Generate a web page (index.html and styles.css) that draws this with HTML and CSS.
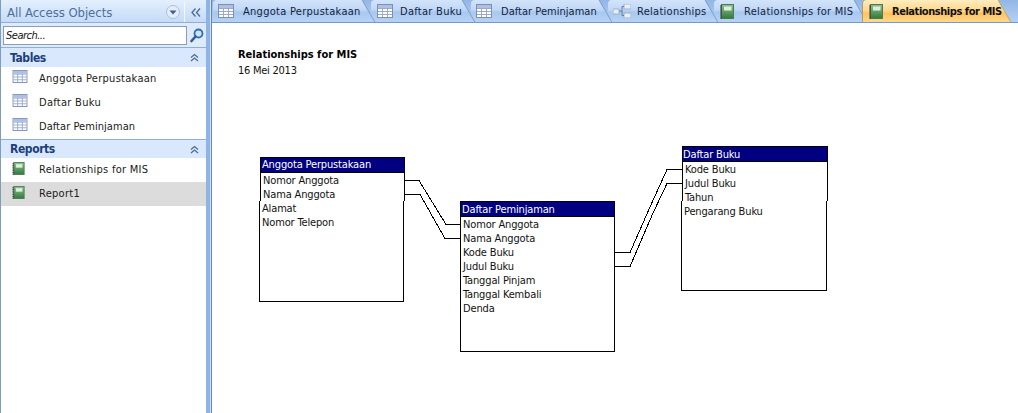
FILE: index.html
```html
<!DOCTYPE html>
<html lang="id">
<head>
<meta charset="utf-8">
<title>Relationships for MIS</title>
<link rel="stylesheet" href="styles.css">
</head>
<body>
<svg class="defs" width="0" height="0" aria-hidden="true">
  <defs>
    <linearGradient id="bookG" x1="0" y1="0" x2="0" y2="1"><stop offset="0" stop-color="#8fc28f"/><stop offset="1" stop-color="#2f7a3a"/></linearGradient>
    <symbol id="i-table" viewBox="0 0 16 14">
      <rect x=".5" y=".5" width="15" height="13" fill="#fff" stroke="#7b8fb8"/>
      <rect x="1" y="1" width="14" height="3" fill="#aebfe0"/>
      <path d="M1 4.500h14M1 7.500h14M1 10.500h14M5.500 4v9M10.500 4v9" stroke="#9aa9cc" fill="none"/>
    </symbol>
    <symbol id="i-report" viewBox="0 0 14 15">
      <rect x="1.500" y=".5" width="12" height="14" fill="url(#bookG)" stroke="#4d7a55"/>
      <rect x="4" y="2.500" width="7.500" height="4" fill="#dcefdc"/>
      <path d="M0 2h2M0 4h2M0 6h2M0 8h2M0 10h2M0 12h2M0 14h2" stroke="#333"/>
    </symbol>
    <symbol id="i-rel" viewBox="0 0 18 14">
      <rect x="0" y="5" width="6" height="5" fill="#e8eff8" stroke="#9fb2cc"/>
      <rect x="11" y="0" width="7" height="5" fill="#e8eff8" stroke="#9fb2cc"/>
      <rect x="11" y="9" width="7" height="5" fill="#e8eff8" stroke="#9fb2cc"/>
      <path d="M6 7h3V2.500h2M9 7v4.500h2" fill="none" stroke="#5d7ea8"/>
    </symbol>
    <symbol id="i-dbl" viewBox="0 0 9 9">
      <path d="M1 4.500 4.500 1.500 8 4.500M1 8 4.500 5 8 8" fill="none" stroke="#4a6a96" stroke-width="1.200"/>
    </symbol>
  </defs>
</svg>
<div class="app">
  <aside class="nav">
    <div class="nav-head">
      <span class="nav-title">All Access Objects</span>
      <svg class="nav-drop" width="14" height="14" viewBox="0 0 14 14"><circle cx="7" cy="7" r="6.500" fill="#e4ecf8" stroke="#a9bfdf"/><path d="M3.500 5.500h7L7 9.500z" fill="#3f5f8f"/></svg>
      <span class="nav-sep"></span>
      <svg class="nav-coll" width="10" height="9" viewBox="0 0 10 9"><path d="M4.500 .5 1 4.500l3.500 4M9 .5 5.500 4.500l3.500 4" fill="none" stroke="#4a6a96" stroke-width="1.300"/></svg>
    </div>
    <div class="search-row">
      <div class="search-box">Search...</div>
      <svg class="search-ico" width="14" height="15" viewBox="0 0 14 15"><circle cx="8.500" cy="5.500" r="4" fill="#cfe3f7" stroke="#2f6db0" stroke-width="1.800"/><path d="M5.500 8.500 1.500 13" stroke="#2a5f9c" stroke-width="2.600" stroke-linecap="round"/></svg>
    </div>
    <div class="group">
      <span>Tables</span>
      <svg class="dbl" width="9" height="9"><use href="#i-dbl"/></svg>
    </div>
    <div class="item"><svg class="ico-t"><use href="#i-table"/></svg><span>Anggota Perpustakaan</span></div>
    <div class="item"><svg class="ico-t"><use href="#i-table"/></svg><span>Daftar Buku</span></div>
    <div class="item"><svg class="ico-t"><use href="#i-table"/></svg><span class="tight">Daftar Peminjaman</span></div>
    <div class="group group-line">
      <span>Reports</span>
      <svg class="dbl" width="9" height="9"><use href="#i-dbl"/></svg>
    </div>
    <div class="item"><svg class="ico-t ico-r"><use href="#i-report"/></svg><span>Relationships for MIS</span></div>
    <div class="item item-sel"><svg class="ico-t ico-r"><use href="#i-report"/></svg><span>Report1</span></div>
  </aside>
  <div class="gutter"></div>
  <main class="main">
    <div class="tabs">
      <div class="tab w1"><svg width="16" height="14"><use href="#i-table"/></svg><span>Anggota Perpustakaan</span></div>
      <div class="tab w2"><svg width="16" height="14"><use href="#i-table"/></svg><span>Daftar Buku</span></div>
      <div class="tab w3"><svg width="16" height="14"><use href="#i-table"/></svg><span>Daftar Peminjaman</span></div>
      <div class="tab w4"><svg width="18" height="14"><use href="#i-rel"/></svg><span>Relationships</span></div>
      <div class="tab w5"><svg width="14" height="15"><use href="#i-report"/></svg><span>Relationships for MIS</span></div>
      <div class="tab w6 tab-on"><svg width="14" height="15"><use href="#i-report"/></svg><span>Relationships for MIS</span></div>
    </div>
    <section class="report">
      <h1 class="rep-title">Relationships for MIS</h1>
      <p class="rep-date">16 Mei 2013</p>
      <svg class="links" width="806" height="391" viewBox="212 22 806 391" fill="none" stroke="#000">
        <path d="M405 179.500h14L446 223.500h14"/>
        <path d="M405 193.500h15L445 237.500h15"/>
        <path d="M615 251.500h15L652 201.500l15-33h15"/>
        <path d="M615 265.500h15L653 212l14-29.500h15"/>
      </svg>
      <div class="tbl t1">
        <div class="tbl-top">
          <div class="tbl-hd">Anggota Perpustakaan</div>
          <div class="row">Nomor Anggota</div>
          <div class="row">Nama Anggota</div>
        </div>
        <div class="tbl-bot">
          <div class="row">Alamat</div>
          <div class="row">Nomor Telepon</div>
        </div>
      </div>
      <div class="tbl t2">
        <div class="tbl-top">
          <div class="tbl-hd">Daftar Peminjaman</div>
          <div class="row">Nomor Anggota</div>
          <div class="row">Nama Anggota</div>
          <div class="row">Kode Buku</div>
          <div class="row">Judul Buku</div>
          <div class="row">Tanggal Pinjam</div>
          <div class="row">Tanggal Kembali</div>
          <div class="row">Denda</div>
        </div>
      </div>
      <div class="tbl t3">
        <div class="tbl-top">
          <div class="tbl-hd">Daftar Buku</div>
          <div class="row">Kode Buku</div>
          <div class="row">Judul Buku</div>
          <div class="row">Tahun</div>
        </div>
        <div class="tbl-bot">
          <div class="row">Pengarang Buku</div>
        </div>
      </div>
    </section>
  </main>
</div>
</body>
</html>
```
FILE: styles.css
```css
* { box-sizing: border-box; }
html, body { margin: 0; height: 100%; }
body { font-family: "DejaVu Sans Condensed", "DejaVu Sans", sans-serif; font-size: 11px; color: #000; overflow: hidden; background: #fff; }
.defs { display: block; height: 0; }
.app { display: flex; width: 1018px; height: 413px; }

.nav { width: 206px; flex: none; border-left: 1px solid #7f9db9; display: flex; flex-direction: column; background: #fff; }
.nav-head { height: 23px; display: flex; align-items: center; padding: 2px 0 0 6px; background: linear-gradient(#e3effd, #c5dbf7); border-bottom: 1px solid #8cb0de; }
.nav-title { font-size: 13px; color: #4c6f9f; flex: 1; letter-spacing: -.05px; }
.nav-drop { margin-right: 4px; }
.nav-sep { width: 1px; height: 20px; background: #f4f8fe; margin-right: 6px; }
.nav-coll { margin-right: 5px; }
.search-row { height: 25px; display: flex; align-items: center; padding-left: 2px; background: #dfeafb; border-bottom: 1px solid #8cb0de; }
.search-box { width: 184px; height: 19px; background: #fff; border: 1px solid #8b9db5; padding-left: 2px; line-height: 17px; font-style: italic; color: #111; letter-spacing: -.5px; }
.search-ico { margin-left: 3px; }
.group { height: 19px; display: flex; align-items: center; justify-content: space-between; padding: 0 7px 0 9px; background: #d9e8fc; color: #1d3f7c; font-weight: bold; font-size: 12px; letter-spacing: -.4px; }
.group-line { border-top: 1px solid #8cb0de; }
.dbl { flex: none; }
.item { height: 24px; display: flex; padding-left: 11px; color: #1a1a1a; }
.item span { margin-left: 11px; line-height: 24px; letter-spacing: .28px; }
.item .tight { letter-spacing: .05px; }
.ico-t { width: 16px; height: 13px; margin-top: 3px; flex: none; }
.ico-r { width: 13px; margin: 4px 3px 0 0; }
.item-sel { background: #dcdcdc; }

.gutter { width: 6px; flex: none; background: linear-gradient(90deg, #8cb4e8 0 4px, #d3e3f8 4px 5px, #6f86a6 5px); }

.main { flex: 1; min-width: 0; display: flex; flex-direction: column; }
.tabs { height: 23px; display: flex; gap: 9px; padding-left: 1px; background: linear-gradient(#93b6e6, #b5d0f3); border-bottom: 1px solid #6f99cf; }
.tab { position: relative; display: flex; align-items: center; height: 22px; padding-left: 5px; background: linear-gradient(#d3e4fa 0, #bfd7f6 45%, #a8c8f0 55%, #b7d2f4 100%); border-radius: 4px 0 0 0; color: #15233a; }
.tab svg { flex: none; }
.tab span { margin-left: 9px; white-space: nowrap; letter-spacing: .28px; }
.tab::after { content: ""; position: absolute; top: 0; right: -7px; width: 14px; height: 22px; background: inherit; border-right: 1px solid #7e9fcb; transform: skewX(30deg); z-index: -1; }
.w1 { width: 149px; z-index: 6; }
.w2 { width: 91px; z-index: 5; padding-left: 6px; }
.w2 span { margin-left: 7px; }
.w3 { width: 128px; z-index: 4; padding-left: 5px; }
.w3 span { letter-spacing: .03px; }
.w4 { width: 97px; z-index: 3; }
.w4 span { margin-left: 6px; }
.w5 { width: 140px; z-index: 2; padding-left: 6px; }
.w5 span { margin-left: 10px; }
.w6 { width: 135px; z-index: 7; padding-left: 6px; }
.tab-on { background: linear-gradient(#ffedc0 0, #ffd68a 50%, #ffc35c 60%, #ffd88f 100%); box-shadow: -1px 0 0 #b89a5c; font-weight: bold; color: #101010; }
.tab-on span { letter-spacing: -.45px; }
.tab-on::after { border-right-color: #c9a763; }

.report { flex: 1; position: relative; background: #fff; padding: 25px 0 0 26px; }
.rep-title { margin: 0; font-size: 11px; font-weight: bold; line-height: 14px; color: #000; }
.rep-date { margin: 2px 0 0; line-height: 14px; color: #111; letter-spacing: -.25px; }
.links { position: absolute; left: 0; top: 0; shape-rendering: crispEdges; }

.tbl { position: absolute; width: 145px; }
.t1 { left: 48px; top: 134px; }
.t2 { left: 248px; top: 178px; width: 155px; }
.t3 { left: 470px; top: 123px; width: 146px; }
.tbl-top { background: #fff; border: 1px solid #000; border-bottom: 0; }
.tbl-bot { position: relative; background: #fff; border: 1px solid #000; border-top: 0; margin-left: -1px; margin-right: 1px; }
.t1 .tbl-top { height: 44px; }
.t1 .tbl-bot { height: 101px; }
.t2 .tbl-top { height: 151px; border-bottom: 1px solid #000; }
.t3 .tbl-top { height: 55px; }
.t3 .tbl-bot { height: 90px; padding-top: 3px; }
.tbl-hd { height: 15px; background: #000080; color: #fff; line-height: 14px; padding-left: 1px; border-bottom: 1px solid #000; white-space: nowrap; letter-spacing: -.15px; }
.t2 .tbl-hd, .t3 .tbl-hd { line-height: 16px; }
.t3 .tbl-hd { padding-left: 0; }
.row { height: 14px; line-height: 16px; padding-left: 2px; color: #111; white-space: nowrap; letter-spacing: -.15px; }
```
